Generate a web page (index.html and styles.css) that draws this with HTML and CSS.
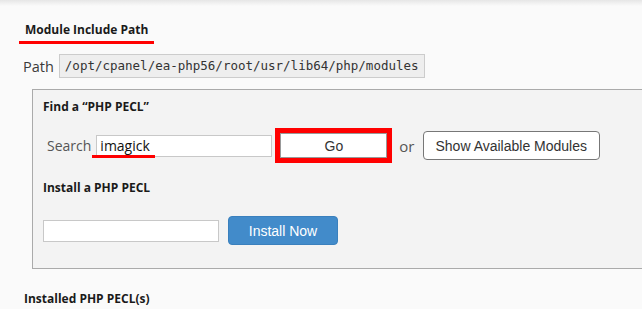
FILE: index.html
```html
<!DOCTYPE html>
<html lang="en">
<head>
    <meta charset="UTF-8">
    <title>PHP PECL</title>
    <link rel="stylesheet" href="styles.css">
</head>
<body>
    <div class="top-shade"></div>

    <div id="pageBody">
        <h3 class="section-title"><span class="marked">Module Include Path</span></h3>

        <div class="path-row">
            <span class="path-label">Path</span>
            <code class="path-value">/opt/cpanel/ea-php56/root/usr/lib64/php/modules</code>
        </div>

        <div class="pecl-panel">
            <h4 class="panel-title">Find a &ldquo;PHP PECL&rdquo;</h4>
            <div class="search-row">
                <label for="searchText" class="search-label">Search</label>
                <div class="search-wrap">
                    <input type="text" id="searchText" class="text-input" value="imagick">
                    <span class="search-mark"></span>
                </div>
                <div class="go-mark">
                    <button class="btn btn-plain go-btn">Go</button>
                </div>
                <span class="or-text">or</span>
                <button class="btn btn-plain">Show Available Modules</button>
            </div>

            <h4 class="panel-title install-title">Install a PHP PECL</h4>
            <div class="install-row">
                <input type="text" class="text-input">
                <button class="btn btn-primary">Install Now</button>
            </div>
        </div>

        <h3 class="section-title installed-title">Installed PHP PECL(s)</h3>
    </div>
</body>
</html>
```

FILE: styles.css
```css
*, *::before, *::after {
    box-sizing: border-box;
}

html, body {
    width: 100%;
    height: 100%;
    margin: 0;
}
body {
    background: #fafafa;
    font-family: "Open Sans", "Noto Sans", sans-serif;
    color: #333;
    overflow: hidden;
}
.top-shade {
    height: 6px;
    background: linear-gradient(#e6e6e6, #fafafa);
}
#pageBody {
    padding-left: 19px;
}
.section-title {
    margin: 15px 0 0;
    font-size: 12px;
    line-height: 18px;
    font-weight: bold;
    color: #1a1a1a;
}
.marked {
    display: inline-block;
    padding: 0 6px 2px;
    border-bottom: 3px solid #f00;
}
.path-row {
    display: flex;
    align-items: center;
    gap: 5px;
    margin-top: 10px;
    margin-left: 4px;
}
.path-label {
    font-size: 14.5px;
    color: #3a3a3a;
}
.path-value {
    height: 24px;
    line-height: 22px;
    padding: 0 5px;
    background: #eee;
    border: 1px solid #ccc;
    font-family: "DejaVu Sans Mono", monospace;
    font-size: 12.5px;
    color: #333;
}
.pecl-panel {
    width: calc(100% + 20px);
    margin: 11px 0 0 13px;
    padding: 8px 10px 23px;
    background: #f3f3f3;
    border: 1px solid #aaa;
}
.panel-title {
    margin: 0;
    font-size: 12px;
    line-height: 17px;
    font-weight: bold;
    color: #1a1a1a;
}
.search-row {
    display: flex;
    align-items: center;
    margin-top: 13px;
    margin-left: 4px;
}
.search-label {
    font-size: 14px;
    color: #555;
    margin-right: 5px;
}
.search-wrap {
    position: relative;
}
.text-input {
    display: block;
    width: 176px;
    height: 22px;
    margin: 0;
    padding: 0 3px;
    border: 1px solid #c8c8c8;
    background: #fff;
    font-family: "Open Sans", "Noto Sans", sans-serif;
    font-size: 14px;
    color: #111;
}
.search-mark {
    position: absolute;
    left: -4px;
    bottom: -1px;
    width: 63px;
    height: 3px;
    background: #f00;
}
.go-mark {
    margin-left: 3px;
    border: 5px solid #f00;
}
.btn {
    height: 29px;
    margin: 0;
    padding: 0 12px;
    font-family: "Liberation Sans", Arial, sans-serif;
    font-size: 14px;
    cursor: pointer;
}
.btn-plain {
    background: #fff;
    color: #333;
    border: 1px solid #777;
    border-radius: 4px;
}
.go-btn {
    display: block;
    width: 107px;
    height: 25px;
    border: 1px solid #999;
    border-radius: 0;
}
.or-text {
    font-size: 15px;
    color: #555;
    margin: 0 8px 0 7px;
}
.install-title {
    margin-top: 16px;
}
.install-row {
    display: flex;
    align-items: center;
    gap: 9px;
    margin-top: 20px;
}
.btn-primary {
    width: 110px;
    background: #428bca;
    color: #fff;
    border: 1px solid #3a80bd;
    border-radius: 4px;
}
.installed-title {
    margin: 21px 0 0 5px;
    font-size: 12px;
}
```
